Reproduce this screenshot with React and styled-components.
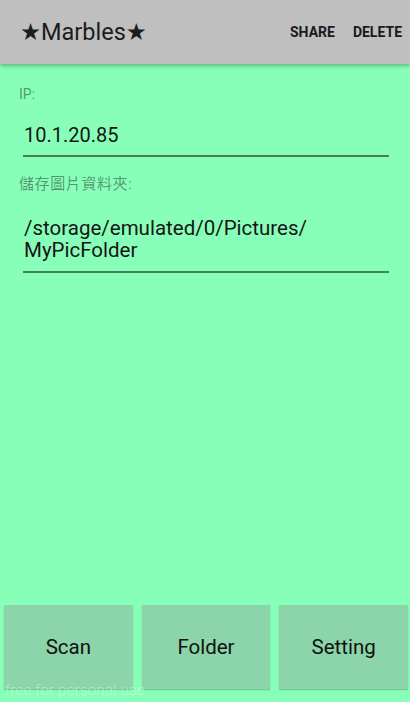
import React from "react";
import styled, { createGlobalStyle } from "styled-components";

const Global = createGlobalStyle`
  html, body { margin: 0; padding: 0; }
  body { font-family: Roboto, "Noto Sans", "Noto Sans CJK TC", sans-serif; background: #88ffb8; }
  #root { min-height: 100vh; }
`;

const Screen = styled.div`
  position: relative;
  display: flex;
  flex-direction: column;
  height: 702px;
  background: #88ffb8;
  overflow: hidden;
`;

const Toolbar = styled.header`
  position: relative;
  z-index: 1;
  flex: none;
  height: 64px;
  display: flex;
  align-items: center;
  padding: 0 8px 0 20px;
  background: #bfbfbf;
  box-shadow: 0 2px 4px rgba(0, 0, 0, 0.28);
`;

const Title = styled.h1`
  margin: 0;
  flex: 1;
  font-family: Roboto, "DejaVu Sans", sans-serif;
  font-weight: 400;
  font-size: 23.5px;
  line-height: 26px;
  color: #1c1c1c;
`;

const Actions = styled.nav`
  display: flex;
  gap: 18px;
`;

const Action = styled.span`
  font-family: Roboto, sans-serif;
  font-weight: 700;
  font-size: 14px;
  line-height: 16px;
  color: #1a1a1a;
`;

const Form = styled.main`
  flex: 1;
  display: flex;
  flex-direction: column;
  padding: 22px 21px 0 19px;
`;

const Label = styled.div`
  margin-top: ${(p) => p.$top || 0}px;
  font-size: ${(p) => p.$size || 14}px;
  letter-spacing: ${(p) => p.$spacing || 0}px;
  line-height: 17px;
  color: rgba(0, 0, 0, 0.42);
  font-family: Roboto, "Noto Sans CJK TC", sans-serif;
`;

const Field = styled.div`
  margin: ${(p) => p.$top}px 0 0 4px;
  padding: 0 0 ${(p) => p.$bottom}px 1px;
  border-bottom: 2px solid rgba(0, 0, 0, 0.5);
  font-size: ${(p) => p.$size || 20}px;
  line-height: ${(p) => p.$lh}px;
  color: #151515;
`;

const ButtonBar = styled.div`
  flex: none;
  display: grid;
  grid-template-columns: repeat(3, 1fr);
  gap: 9px;
  padding: 0 2px 0 4px;
  margin-bottom: 13px;
`;

const Button = styled.button`
  height: 84px;
  border: none;
  border-radius: 1px;
  background: #8cd4aa;
  box-shadow: 0 1px 1.5px rgba(0, 0, 0, 0.25);
  font-family: Roboto, sans-serif;
  font-size: 20.5px;
  color: #111;
  padding: 0;
`;

const Watermark = styled.div`
  position: absolute;
  left: 5px;
  bottom: 3px;
  font-family: Roboto, sans-serif;
  font-weight: 300;
  font-size: 15.5px;
  line-height: 18px;
  color: rgba(255, 255, 255, 0.42);
  pointer-events: none;
`;

export default function App() {
  return (
    <>
      <Global />
      <Screen>
        <Toolbar>
          <Title>★Marbles★</Title>
          <Actions>
            <Action>SHARE</Action>
            <Action>DELETE</Action>
          </Actions>
        </Toolbar>
        <Form>
          <Label>IP:</Label>
          <Field $top={20} $bottom={8} $lh={24}>10.1.20.85</Field>
          <Label $top={19} $size={15} $spacing={0.6}>儲存圖片資料夾:</Label>
          <Field $top={24} $bottom={10} $lh={22} $size={20.5}>
            /storage/emulated/0/Pictures/
            <br />
            MyPicFolder
          </Field>
        </Form>
        <ButtonBar>
          <Button>Scan</Button>
          <Button>Folder</Button>
          <Button>Setting</Button>
        </ButtonBar>
        <Watermark>free for personal use</Watermark>
      </Screen>
    </>
  );
}
